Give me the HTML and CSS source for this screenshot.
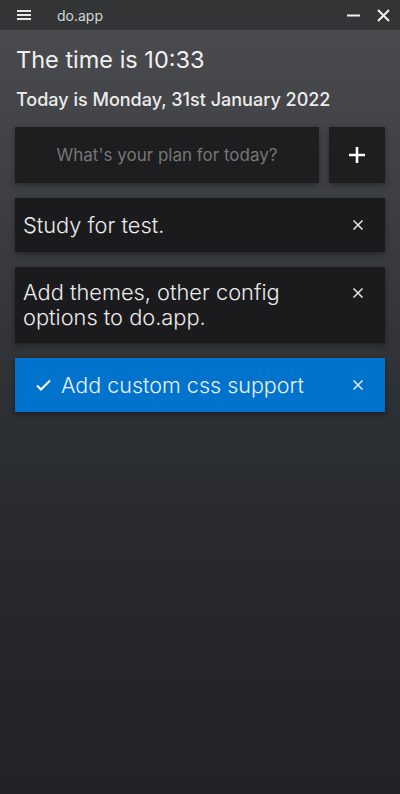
FILE: index.html
```html
<!DOCTYPE html>
<html>
<head>
<meta charset="utf-8">
<link rel="stylesheet" href="styles.css">
</head>
<body>
<div class="titlebar">
  <svg class="menu" width="14" height="10" viewBox="0 0 14 10"><path d="M0 1h14M0 5h14M0 9h14" stroke="#e6e6e6" stroke-width="2"/></svg>
  <span class="apptitle">do.app</span>
  <div class="winbtns">
    <svg width="13" height="13" viewBox="0 0 13 13"><path d="M0 6.5h13" stroke="#f0f0f0" stroke-width="2"/></svg>
    <svg width="13" height="13" viewBox="0 0 13 13"><path d="M1 1L12 12M12 1L1 12" stroke="#f0f0f0" stroke-width="2"/></svg>
  </div>
</div>
<main class="content">
  <h1 class="time">The time is 10:33</h1>
  <p class="date">Today is Monday, 31st January 2022</p>
  <div class="entry">
    <div class="input">What's your plan for today?</div>
    <div class="add"><svg width="16" height="16" viewBox="0 0 16 16"><path d="M8 0v16M0 8h16" stroke="#fff" stroke-width="2.6"/></svg></div>
  </div>
  <ul class="todos">
    <li class="todo"><span class="text">Study for test.</span><span class="close"><svg width="10" height="10" viewBox="0 0 10 10"><path d="M0.5 0.5L9.5 9.5M9.5 0.5L0.5 9.5" stroke="#e8e8e8" stroke-width="1.5"/></svg></span></li>
    <li class="todo multi"><span class="text">Add themes, other config options to do.app.</span><span class="close"><svg width="10" height="10" viewBox="0 0 10 10"><path d="M0.5 0.5L9.5 9.5M9.5 0.5L0.5 9.5" stroke="#e8e8e8" stroke-width="1.5"/></svg></span></li>
    <li class="todo done"><svg class="check" width="15" height="12" viewBox="0 0 15 12"><path d="M1 6.5L5 10.5L14 1.5" fill="none" stroke="#fff" stroke-width="2"/></svg><span class="text">Add custom css support</span><span class="close"><svg width="10" height="10" viewBox="0 0 10 10"><path d="M0.5 0.5L9.5 9.5M9.5 0.5L0.5 9.5" stroke="#e8e8e8" stroke-width="1.5"/></svg></span></li>
  </ul>
</main>
</body>
</html>
```
FILE: styles.css
```css
* { box-sizing: border-box; }
html, body { margin: 0; padding: 0; height: 100%; }
body {
  font-family: Inter, "Noto Sans", sans-serif;
  color: #f2f2f2;
  background: linear-gradient(180deg, #4c4d50 0px, #3e3f42 200px, #2c2f33 420px, #25272b 620px, #222327 794px);
  min-height: 794px;
}
.titlebar {
  height: 30px;
  background: #333436;
  display: flex;
  align-items: center;
  padding: 0 10px 0 17px;
}
.menu { display: block; }
.apptitle {
  margin-left: 26px;
  font-size: 14px;
  color: #d4d4d4;
}
.winbtns {
  margin-left: auto;
  display: flex;
  gap: 17px;
  align-items: center;
}
.winbtns svg { display: block; }
.content { padding: 0 15px; }
.time {
  margin: 14px 0 0 1px;
  font-size: 23.5px;
  font-weight: 400;
  line-height: 32px;
  color: #f0f0f0;
}
.date {
  margin: 12px 0 0 1px;
  font-size: 18px;
  font-weight: 500;
  line-height: 23px;
  color: #ececec;
}
.entry {
  margin-top: 16px;
  display: flex;
  gap: 10px;
  height: 56px;
}
.input {
  flex: 1;
  background: #1e1e20;
  color: #767676;
  font-size: 17px;
  display: flex;
  align-items: center;
  justify-content: center;
  box-shadow: 0 2px 6px rgba(0,0,0,0.35);
}
.add {
  width: 56px;
  background: #1e1e20;
  display: flex;
  align-items: center;
  justify-content: center;
  box-shadow: 0 2px 6px rgba(0,0,0,0.35);
}
.add svg { display: block; }
.todos {
  list-style: none;
  margin: 15px 0 0;
  padding: 0;
  display: flex;
  flex-direction: column;
  gap: 15px;
}
.todo {
  display: flex;
  align-items: center;
  min-height: 54px;
  padding: 13px 7px 13px 8px;
  background: #1b1b1d;
  box-shadow: 0 2px 6px rgba(0,0,0,0.4);
  font-size: 21.8px;
  font-weight: 300;
  line-height: 25px;
  color: #ececec;
}
.todo .text { flex: 1; }
.todo .close {
  width: 40px;
  align-self: stretch;
  display: flex;
  align-items: center;
  justify-content: center;
}
.todo.multi .close { align-self: flex-start; height: 25px; }
.todo .close svg { display: block; }
.todo.done {
  background: #0273cc;
  padding-left: 21px;
  color: #e8f1fa;
}
.done .text { font-size: 21.5px; }
.check { display: block; margin-right: 10px; }
```
